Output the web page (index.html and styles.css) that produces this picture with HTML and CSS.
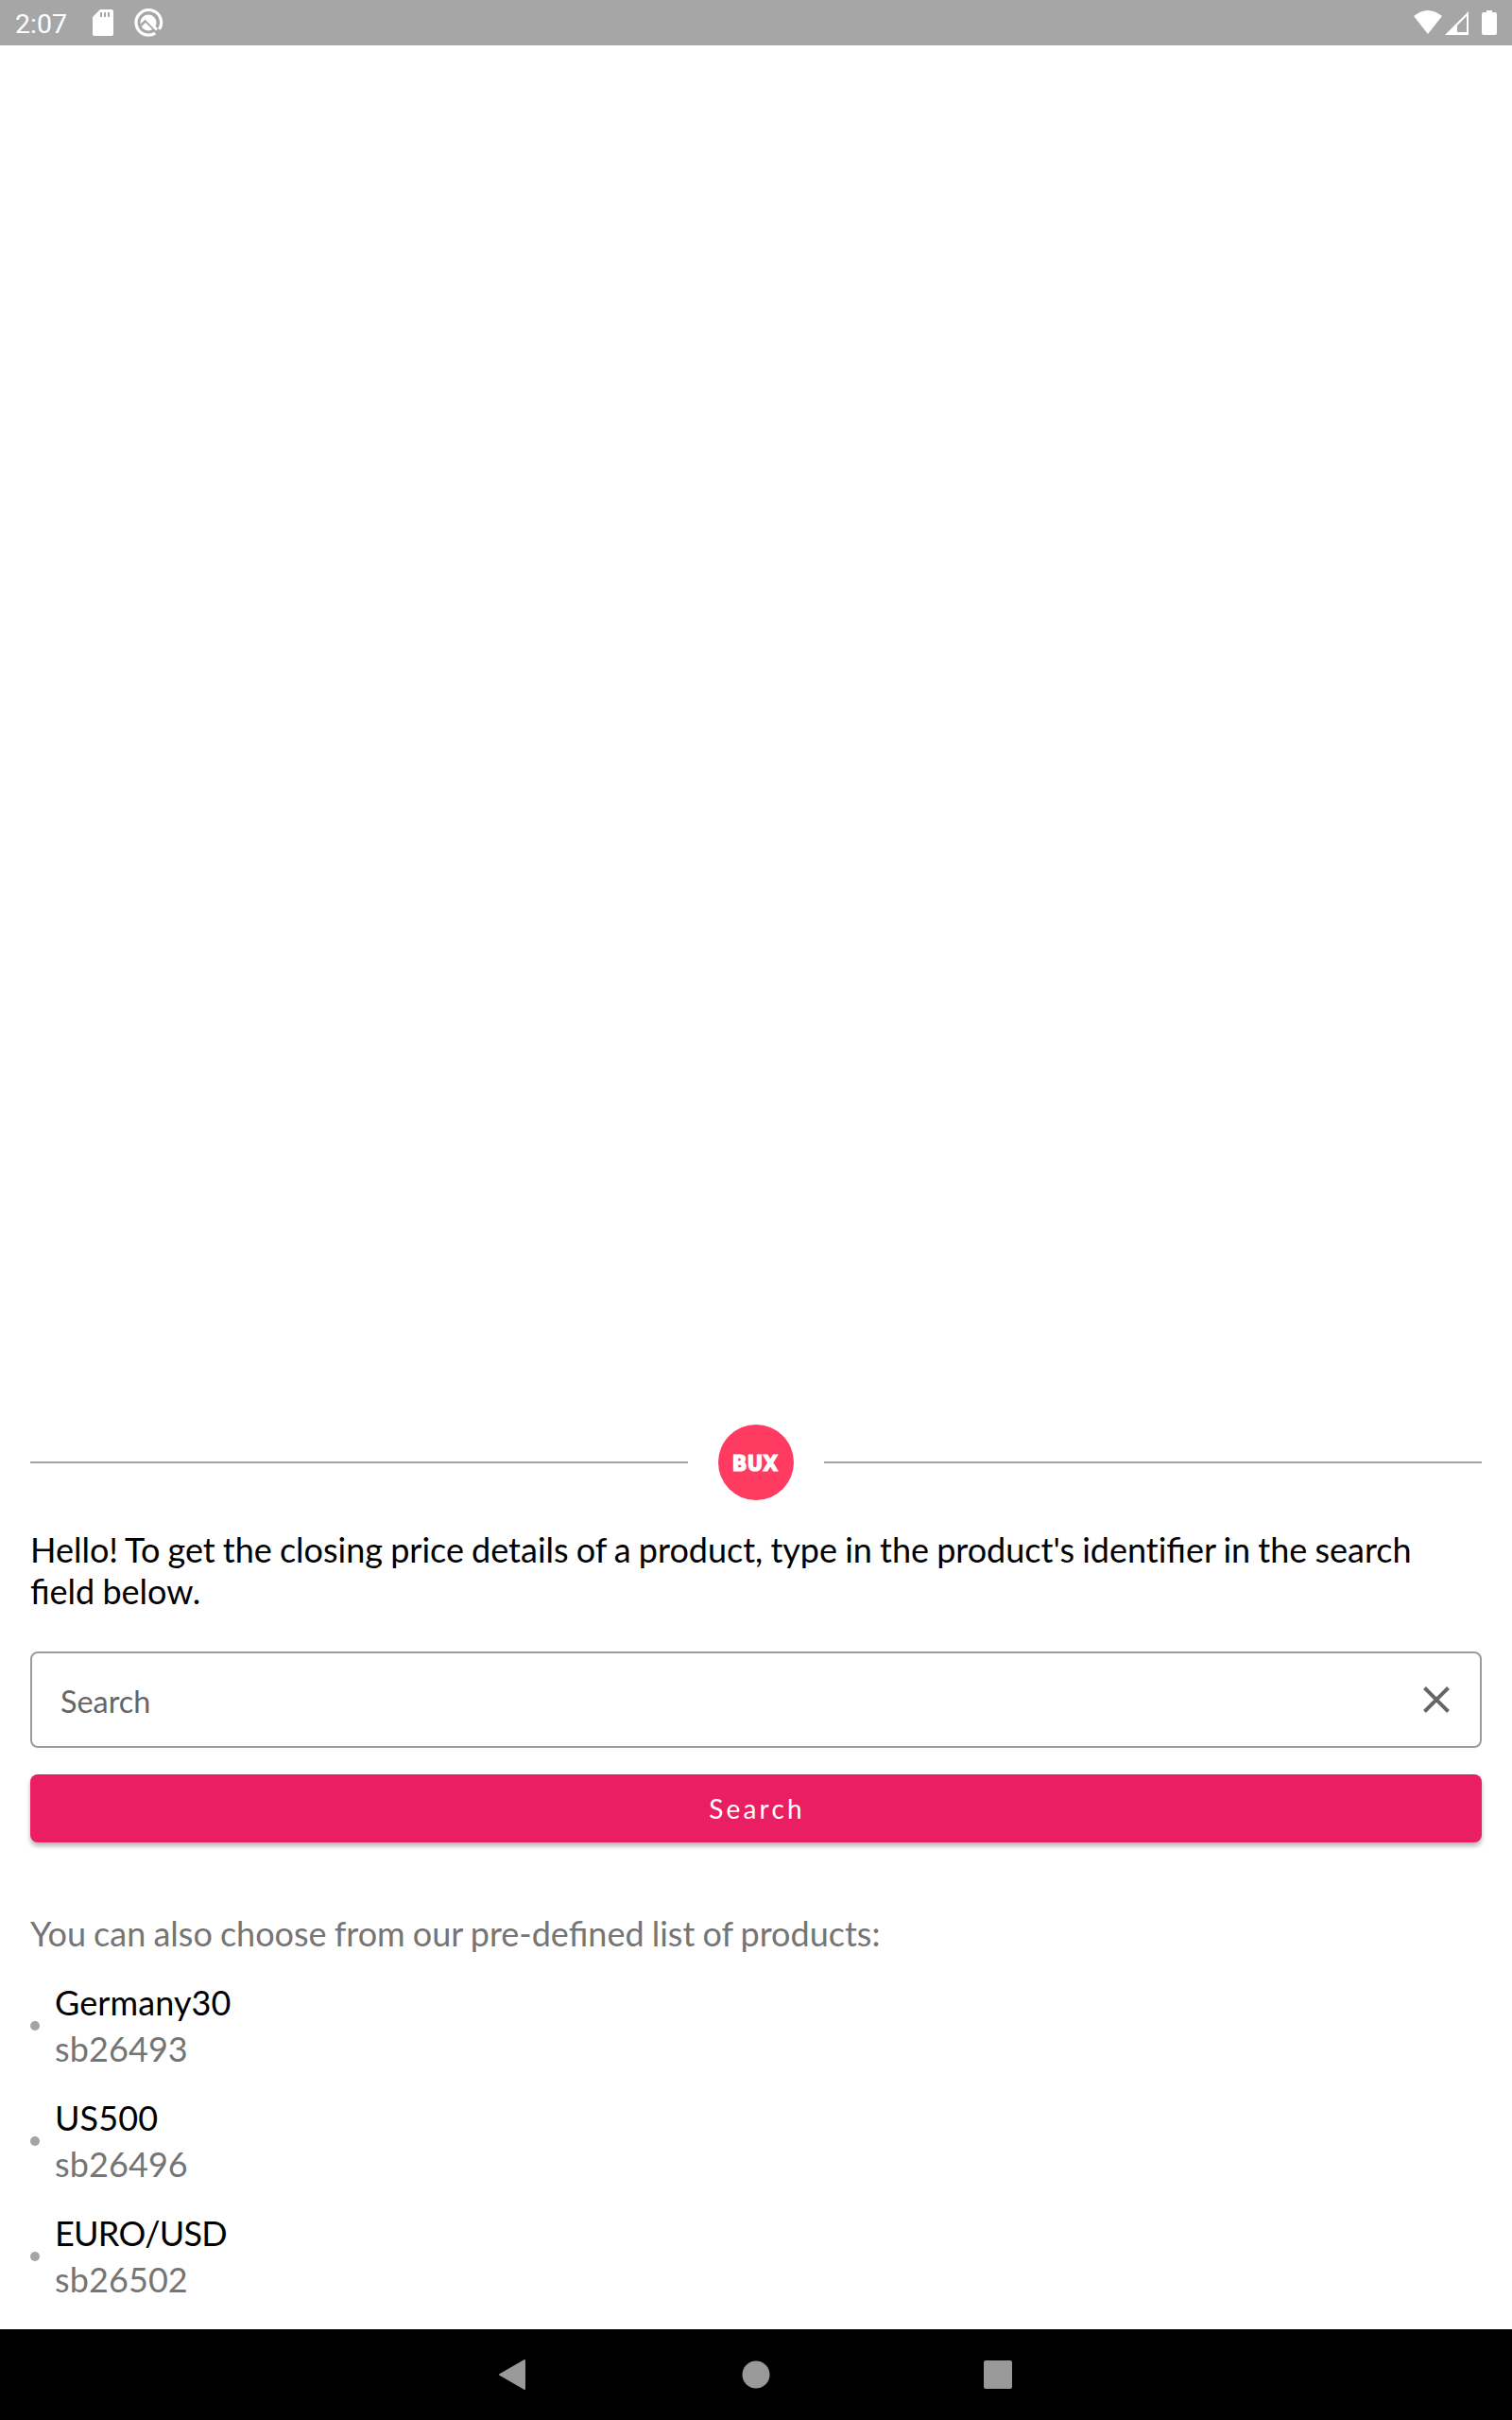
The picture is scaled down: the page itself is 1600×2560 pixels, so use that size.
FILE: index.html
```html
<!DOCTYPE html>
<html lang="en">
<head>
<meta charset="utf-8">
<title>Product search</title>
<link rel="stylesheet" href="styles.css">
</head>
<body>
<header class="status">
  <span class="time">2:07</span>
  <svg class="sd" width="22" height="28" viewBox="0 0 22 28"><path fill="#fff" fill-rule="evenodd" d="M8 0h12q2 0 2 2v24q0 2-2 2H2q-2 0-2-2V8zM8 3v5h2V3zM12 3v5h2V3zM16 3v5h2V3z"/></svg>
  <svg class="sync" width="32" height="32" viewBox="0 0 32 32"><path fill="none" stroke="#fff" stroke-width="3.200" d="M23.200 27.200A13.300 13.300 0 1 1 27.500 23"/><circle cx="16" cy="16" r="8.500" fill="#fff"/><path fill="none" stroke="#a6a6a6" stroke-width="2.500" d="M8 19l5-5L24 25"/><path stroke="#fff" stroke-width="3" d="M14 12L25 23.500"/></svg>
  <svg class="signals" width="88" height="26" viewBox="0 0 88 26"><path fill="#fff" d="M0 6Q15-6 30 6L15 25zM83 2V0h-6v2h-3q-2 0-2 2v20q0 2 2 2h12q2 0 2-2V4q0-2-2-2z"/><path fill="#fff" fill-rule="evenodd" d="M33 26L58 1v25zM46 16v7h10V6z"/></svg>
</header>
<main class="content">
  <div class="brand"><hr><div class="logo">BUX</div><hr></div>
  <p class="intro">Hello! To get the closing price details of a product, type in the product's <span class="plain">ident</span>ifier in the search field below.</p>
  <div class="field"><span>Search</span><svg width="28" height="28" viewBox="0 0 28 28"><path stroke="#666" stroke-width="4" d="M1.500 1.500l25 25m0-25l-25 25"/></svg></div>
  <button class="search">Search</button>
  <p class="hint">You can also choose from our pre-defined list of products:</p>
  <ul class="products">
    <li><i></i><div><b>Germany30</b><span>sb26493</span></div></li>
    <li><i></i><div><b>US500</b><span>sb26496</span></div></li>
    <li><i></i><div><b class="pair">EURO/USD</b><span>sb26502</span></div></li>
  </ul>
</main>
<nav class="nav"><svg width="600" height="96" viewBox="0 0 600 96"><g fill="#999"><path stroke="#999" stroke-width="2" stroke-linejoin="round" d="M29 48L55 33v30z"/><circle cx="300" cy="48" r="14.500"/><rect x="541" y="33" width="30" height="30" rx="2"/></g></svg></nav>
</body>
</html>
```

FILE: styles.css
```css
* { box-sizing: border-box; }
body { margin: 0; height: 2560px; display: flex; flex-direction: column; background: #fff; font-family: Lato, sans-serif; color: #000; }
.status { height: 48px; background: #a6a6a6; display: flex; align-items: center; padding: 0 16px; color: #fff; font: 28.5px Roboto, sans-serif; }
.time { width: 82px; padding-top: 2px; }
.sync { margin-left: 21px; }
.signals { margin-left: auto; }
.content { flex: 1; display: flex; flex-direction: column; justify-content: flex-end; padding: 0 32px 28px; }
.brand { display: flex; align-items: center; gap: 32px; }
.brand hr { flex: 1; height: 2px; margin: 0; border: 0; background: #a4a4a4; }
.logo { width: 80px; height: 80px; padding: 2px 2px 0 0; border-radius: 50%; background: #ff3b62; color: #fff; font: bold 23px "DejaVu Sans Condensed", "DejaVu Sans", sans-serif; font-stretch: condensed; -webkit-text-stroke: 1.2px #fff; display: flex; align-items: center; justify-content: center; }
.intro { margin: 30px 0 42px; font-size: 36px; line-height: 44px; word-spacing: -1.1px; }
.plain { font-variant-ligatures: none; }
.field { height: 102px; border: 2px solid #9b9b9b; border-radius: 8px; padding: 0 32px 0 30px; display: flex; align-items: center; justify-content: space-between; color: #666; font-size: 32.4px; }
.field span { padding-top: 3px; }
.search { height: 72px; margin-top: 28px; padding: 0 4px 1px 6px; border: 0; border-radius: 8px; background: #e91e63; color: #fff; font: 28px Lato, sans-serif; letter-spacing: 3.2px; box-shadow: 0 4px 5px rgba(0,0,0,.28); }
.hint { margin: 74px 0 27px; font-size: 36px; line-height: 44px; color: #757575; word-spacing: -1.1px; }
.products { margin: 0; padding: 0; list-style: none; display: flex; flex-direction: column; gap: 24px; }
.products li { height: 98px; display: flex; align-items: center; gap: 16px; }
.products i { width: 10px; height: 10px; border-radius: 50%; background: #a4a4a4; }
.products b, .products span { display: block; font-size: 36px; font-weight: 400; line-height: 49px; letter-spacing: .1px; }
.products .pair { letter-spacing: -.7px; }
.products span { color: #757575; }
.nav { height: 96px; background: #000; display: flex; justify-content: center; }
```
